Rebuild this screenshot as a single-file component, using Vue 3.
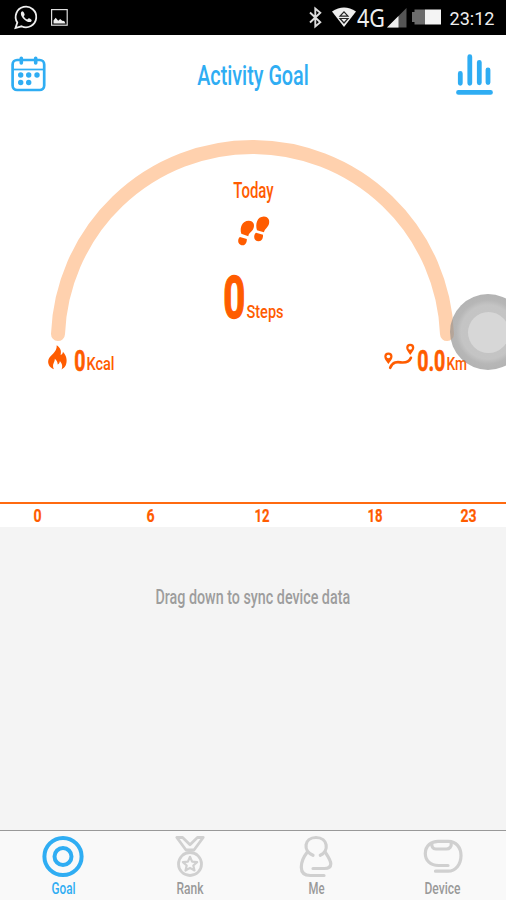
<script setup>
import { h } from 'vue'

// Condensed lettering: w = drawn width, cap = capital height in pixels,
// heavy = extra outline in pixels on top of the bold weight.
const Din = ({ t, w, cap, heavy }) => {
  const size = cap / 0.711
  const b = size * 0.03
  return h('svg', { width: w, height: cap, class: 'din' }, [
    h('text', {
      x: -b, y: cap, textLength: w + b * 2, lengthAdjust: 'spacingAndGlyphs',
      'font-size': size, 'font-weight': heavy ? 700 : 500, fill: 'currentColor',
      stroke: heavy ? 'currentColor' : 'none', 'stroke-width': heavy || 0
    }, t)
  ])
}
Din.props = ['t', 'w', 'cap', 'heavy']

const hours = [
  { t: '0', w: 7 }, { t: '6', w: 7 }, { t: '12', w: 14 }, { t: '18', w: 14 }, { t: '23', w: 15 }
]
</script>

<template>
  <div class="screen">
    <div class="status">
      <svg class="whatsapp" width="24" height="25" viewBox="0 0 24 25" fill="none" stroke="#eee" stroke-width="1.8">
        <path d="M1.500 23l1.800-5.400A10.300 10.300 0 1 1 7.500 21.300z" />
        <path d="M8.300 6.300c-2.600 1.300-1.300 5 1.400 7.700s6.400 4.400 7.900 1.900c.6-1.100-1.900-2.600-2.900-2.600l-1.500 1.300c-1.600-.7-2.800-1.900-3.500-3.400l1-1.300c0-1-1-3.500-2.400-3.600z" fill="#eee" stroke="none" />
      </svg>
      <svg class="picture" width="17" height="17" viewBox="0 0 17 17">
        <rect x=".6" y=".6" width="15.600" height="15.600" fill="none" stroke="#ddd" stroke-width="1.2" />
        <path d="M2.500 14.500v-3l2.200-2.700 2.500 3 2-1.800 2 1.700 2 .2 1.300 2.600z" fill="#eee" />
      </svg>
      <div class="status-right">
        <svg class="bt" width="13" height="21" viewBox="0 0 13 21" fill="none" stroke="#ddd" stroke-width="1.900">
          <path d="M1 5.500l10.300 9.700-5 4.300V1.500l5 4.300L1 15.500" />
        </svg>
        <svg class="wifi" width="24" height="20" viewBox="0 0 24 20">
          <path d="M0 4.500Q12-3.500 24 4.500L12 20z" fill="#eee" />
          <path d="M8 9.200l4-4.400 4 4.400zM8 11.500h8l-4 4.500z" fill="none" stroke="#222" stroke-width="1.200" />
        </svg>
        <svg class="fourg" width="27" height="18"><text x="-1" y="18" textLength="28" lengthAdjust="spacingAndGlyphs" font-size="25" fill="#eee">4G</text></svg>
        <svg class="signal" width="20" height="20" viewBox="0 0 20 20">
          <path d="M0 19.500L19.500 0v19.500z" fill="#555" /><path d="M0 19.500L11.500 8v11.500z" fill="#eee" />
        </svg>
        <svg class="battery" width="29" height="16" viewBox="0 0 29 16">
          <path d="M0 3h2.500V.5H13v15H2.500V13H0z" fill="#6c6c6c" /><path d="M13 .5h16v15H13z" fill="#f4f4f4" />
        </svg>
        <svg class="clock" width="44" height="13"><text x="-.5" y="13" textLength="45" lengthAdjust="spacingAndGlyphs" font-size="18" fill="#eee">23:12</text></svg>
      </div>
    </div>

    <header class="header">
      <svg class="calendar" width="35" height="36" viewBox="0 0 35 36" fill="none" stroke="#2fadf3" stroke-width="2.700">
        <rect x="1.600" y="4" width="31.600" height="30" rx="4.500" />
        <path d="M2 13.500h31" stroke-width="1.700" />
        <path d="M10.300 2.300v4.700M24.700 2.300v4.700" stroke-width="3.600" stroke-linecap="round" />
        <g fill="#2fadf3" stroke="none">
          <circle cx="9.700" cy="19" r="2.700" /><circle cx="17.700" cy="19" r="2.700" /><circle cx="26" cy="19" r="2.700" />
          <circle cx="9.700" cy="26.500" r="2.700" /><circle cx="17.700" cy="26.500" r="2.700" />
        </g>
      </svg>
      <Din t="Activity Goal" :w="110" :cap="19.5" />
      <svg class="chart" width="37" height="42" viewBox="0 0 37 42" stroke="#2fadf3" stroke-width="4.800" stroke-linecap="round">
        <path d="M4.300 19.500v9.800M13.800 2.700v26.600M23.300 8.300v20.500M32 15.800v12.700M2.500 38.400h32" />
      </svg>
    </header>

    <section class="gauge">
      <svg class="arc" width="506" height="232" viewBox="0 0 506 232" fill="none">
        <path d="M58 218A194.650 194.650 0 0 1 447 218" stroke="#ffd1ae" stroke-width="14" stroke-linecap="round" />
      </svg>
      <div class="center">
        <Din t="Today" :w="39" :cap="15.3" />
        <svg class="feet" width="32" height="30" viewBox="0 0 32 30" fill="#ff5c00">
          <path d="M3.300 17.800C1.500 11.500 4 5 10.800 4.800c5 0 6.400 4.500 4.300 8.500-1.500 2.800-4.300 3.500-4.800 7z" />
          <path d="M1.900 21l6.900 2c.3 3-1.200 6.400-4.200 6.300C1.300 29.200.200 26.800.200 25c0-1.700.5-3 1.700-4z" />
          <path d="M19 14.300C17.200 8 18.900.6 25.800.4c5 0 6.400 4.600 4.800 8.500-1.200 2.800-3.900 3.900-4.700 7.300z" />
          <path d="M18 16.700l7 2c.3 3-1.200 6.500-4.300 6.500-3 0-4.500-2-4.500-4.500 0-1.700.6-3 1.800-4z" />
        </svg>
        <div class="steps">
          <Din t="0" :w="18.500" :cap="42" :heavy="1.400" />
          <Din t="Steps" :w="36" :cap="13.300" />
        </div>
      </div>
    </section>

    <section class="totals">
      <div class="total">
        <svg class="flame" width="19" height="25" viewBox="0 0 19 25" fill="#ff5c00">
          <path d="M8.700.3c4.100 2.800 4.800 5.700 3.900 9.700 1.600-.5 2.200-1.500 2.300-3.200 4.200 4.300 4.600 10.300 2.600 14-.8 1.500-2 2.600-4 3.600 1.700-3.500.2-6-1.600-8.400-.2 1.900-1 2.800-2.200 3.500-.1-2.500-1-4.200-2.900-5.700.3 3.600-3.300 5.400-.9 10.400C1.300 22.500-.7 18.400.500 14.500 1.800 10.500 9.300 7.500 8.700.3z" />
        </svg>
        <Din t="0" :w="9.500" :cap="20.500" :heavy=".6" />
        <Din class="unit" t="Kcal" :w="27" :cap="13" />
      </div>
      <div class="total">
        <svg class="route" width="31" height="26" viewBox="0 0 31 26">
          <path d="M4.400 20C2 16.500.3 15 .3 12.500a4.100 4.100 0 0 1 8.200 0c0 2.500-1.700 4-4.100 7.500zM26.200 11c-2.300-3.500-4-5-4-7.200a4 4 0 0 1 8.100 0c0 2.200-1.700 3.700-4.100 7.200z" fill="#ff5c00" />
          <circle cx="4.400" cy="12.500" r="1.800" fill="#fff" /><circle cx="26.200" cy="3.900" r="1.800" fill="#fff" />
          <path d="M6.200 23.800c3-7.300 8.500-5.500 11.800-5.300 4.500.2 7.700-1.700 8.900-4.700" fill="none" stroke="#ff5c00" stroke-width="2.700" stroke-linecap="round" />
        </svg>
        <Din t="0.0" :w="26.500" :cap="20.500" :heavy=".6" />
        <Din class="unit" t="Km" :w="19.500" :cap="13" />
      </div>
    </section>

    <div class="axis">
      <div v-for="hr in hours" :key="hr.t" class="hour"><Din :t="hr.t" :w="hr.w" :cap="13.300" :heavy=".2" /></div>
    </div>

    <main class="sync"><Din t="Drag down to sync device data" :w="193.500" :cap="14.300" /></main>

    <nav class="tabs">
      <div class="tab active">
        <svg width="42" height="42" viewBox="0 0 42 42" fill="none" stroke="#2fadf3" stroke-width="4">
          <circle cx="21" cy="20.500" r="18.600" /><circle cx="21" cy="20.500" r="8.500" />
        </svg>
        <Din t="Goal" :w="23" :cap="12" />
      </div>
      <div class="tab">
        <svg width="42" height="42" viewBox="0 0 42 42" fill="none" stroke="#d0d0d0" stroke-width="2.800" stroke-linejoin="round">
          <path d="M7.800 1.500h5.800l7.400 7.200L28.400 1.500h5.800L25 14h-8z" />
          <circle cx="21" cy="28" r="11.500" />
          <path d="M21 20.800l2.100 4.800 5 .5-3.800 3.400 1.200 5-4.500-2.600-4.500 2.600 1.200-5-3.800-3.400 5-.5z" stroke-width="2.200" />
        </svg>
        <Din t="Rank" :w="26" :cap="12" />
      </div>
      <div class="tab">
        <svg width="42" height="42" viewBox="0 0 42 42" fill="none" stroke="#d0d0d0" stroke-width="3.200" stroke-linecap="round">
          <path d="M18 19.300C7.500 15 9 1.500 21 1.500s13.500 13.500 4.300 17.800" />
          <path d="M12 16.500C8 21.500 6.300 27 6.300 31.300c0 5.700 3.500 8.200 9 8.200H29M30.500 16.500c3.200 5 5.300 8 5.300 11.300 0 3.300-2.500 4.700-6.300 4.700H18" />
        </svg>
        <Din t="Me" :w="15" :cap="12" />
      </div>
      <div class="tab">
        <svg width="42" height="42" viewBox="0 0 42 42" fill="none" stroke="#d0d0d0" stroke-width="3.200" stroke-linecap="round">
          <path d="M26 29.500H16.500C8.500 29.500 3.300 24.500 3.300 17.500 3.300 9.800 9.300 5.300 16 5.300h10.500c7.500 0 12.500 6.200 12.500 14.200 0 9-5.500 15.700-13 15.700H13.500" />
          <path d="M9.800 7.500c-.3 3 1 5.500 4 5.500h10.700c3 0 5.200-2.500 4.700-5.500" />
        </svg>
        <Din t="Device" :w="35" :cap="12" />
      </div>
    </nav>

    <div class="assist"><div class="assist-core"></div></div>
  </div>
</template>

<style>
body { margin: 0; }
.din { display: block; overflow: visible; flex: none; font-family: Roboto, "Liberation Sans", sans-serif; }
</style>

<style scoped>
.screen { position: relative; width: 506px; height: 900px; overflow: hidden; background: #fff; display: flex; flex-direction: column; font-family: Roboto, sans-serif; }
svg { display: block; flex: none; overflow: visible; }
.status { height: 35px; box-sizing: border-box; padding: 0 12px 0 14px; background: #000; display: flex; align-items: flex-start; }
.whatsapp { margin-top: 5px; }
.picture { margin: 9px 0 0 12.500px; }
.status-right { margin-left: auto; display: flex; }
.bt { margin-top: 7px; }
.wifi { margin: 7px 0 0 10px; }
.fourg { margin: 9px 0 0 2px; font-family: "Noto Sans", sans-serif; }
.signal { margin: 8px 0 0 2px; }
.battery { margin: 9px 0 0 5px; }
.clock { margin: 12px 0 0 9px; }
.header { height: 81px; box-sizing: border-box; padding: 19px 13px 0 11px; display: flex; align-items: flex-start; justify-content: space-between; color: #2fadf3; }
.calendar { margin-top: 2px; }
.header .din { margin: 11px 0 0 3px; }
.gauge { height: 232px; display: grid; color: #ff5c00; }
.arc, .center { grid-area: 1 / 1; }
.center { display: flex; flex-direction: column; align-items: center; padding-top: 66.700px; }
.feet { margin: 18px 0 0 2px; }
.steps { display: flex; align-items: flex-end; gap: 3.500px; margin: 30px 0 0 2px; }
.steps .din:first-child { margin-bottom: .5px; }
.totals { height: 154px; box-sizing: border-box; padding: 0 40px 0 48px; display: flex; justify-content: space-between; align-items: flex-start; color: #ff5c00; }
.total { display: flex; align-items: flex-end; height: 22px; }
.flame { margin-right: 8px; }
.route { margin-right: 2.500px; }
.unit { margin-left: 2.500px; }
.axis { height: 25px; box-sizing: border-box; border-top: 2px solid #ff6a10; padding: 5px 0 0; display: grid; grid-template-columns: 75px 150px 74px 151px 37px; color: #ff5c00; }
.hour { display: flex; justify-content: center; }
.sync { flex: 1; background: #f4f4f4; color: #9d9d9d; display: flex; justify-content: center; align-items: flex-start; padding-top: 63px; }
.tabs { height: 70px; box-sizing: border-box; border-top: 1px solid #999; background: #f9f9f9; display: grid; grid-template-columns: repeat(4, 1fr); color: #999; }
.tab { display: flex; flex-direction: column; align-items: center; padding-top: 5px; gap: 4px; }
.active { color: #2fadf3; }
.assist { position: absolute; left: 450px; top: 294px; width: 76px; height: 76px; border-radius: 50%; background: radial-gradient(circle, rgba(160, 160, 160, .62) 0 27px, rgba(145, 145, 145, .66) 32px, rgba(140, 140, 140, .66) 38px); display: grid; place-items: center; }
.assist-core { width: 41px; height: 41px; border-radius: 50%; background: #d7d7d7; }
</style>
